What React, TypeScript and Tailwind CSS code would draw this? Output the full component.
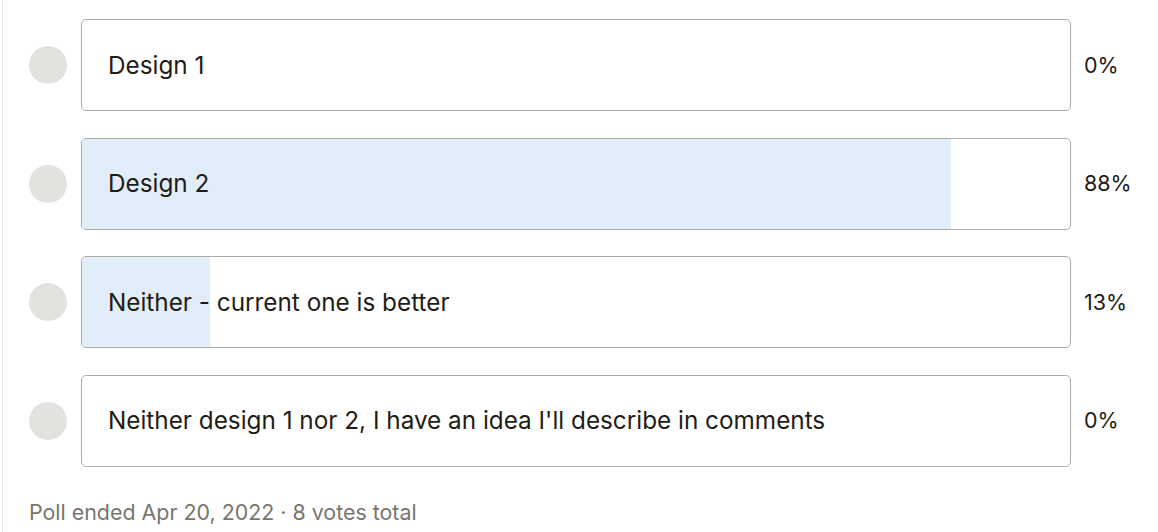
const options = [
  { label: 'Design 1', pct: 0 },
  { label: 'Design 2', pct: 88 },
  { label: 'Neither - current one is better', pct: 13 },
  { label: "Neither design 1 nor 2, I have an idea I'll describe in comments", pct: 0 },
];

export default function App() {
  return (
    <div
      className="h-[532px] w-[1158px] overflow-hidden bg-white"
      style={{ fontFamily: 'Inter, "Noto Sans", sans-serif' }}
    >
      <div className="ml-[2px] h-full border-l border-[#e7e6e2] pl-[26px] pt-[19px]">
        <div className="flex flex-col gap-[26.5px]">
          {options.map((o) => (
            <div key={o.label} className="flex items-center">
              <div className="h-[38px] w-[38px] shrink-0 rounded-full bg-[#e3e2de]" />
              <div className="relative ml-[14px] h-[92px] w-[990px] overflow-hidden rounded-[5px] border border-[#aeaca5]">
                <div className="absolute inset-y-0 left-0 bg-[#e1edf9]" style={{ width: `${o.pct}%` }} />
                <div className="relative flex h-full items-center pl-[26px] text-[24.3px] text-[#1f1c16]">{o.label}</div>
              </div>
              <div className="ml-[13px] text-[21.5px] text-[#1f1c16]">{o.pct}%</div>
            </div>
          ))}
        </div>
        <div className="mt-[29px] text-[21.4px] text-[#78756e]">Poll ended Apr 20, 2022 · 8 votes total</div>
      </div>
    </div>
  );
}
